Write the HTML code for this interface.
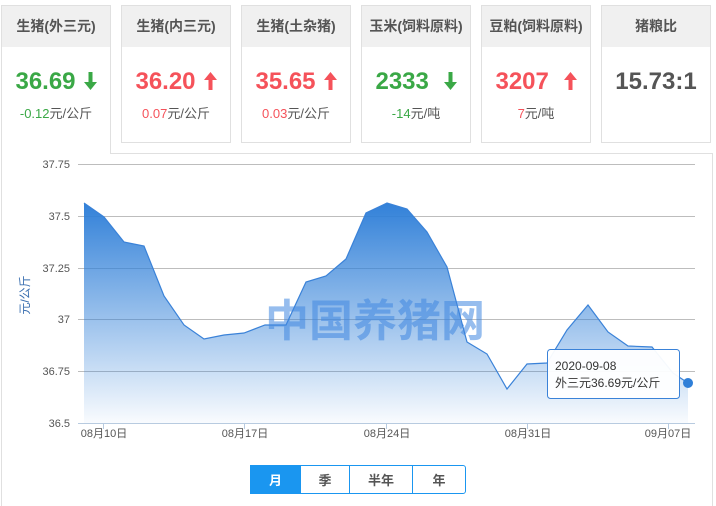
<!DOCTYPE html><html style="height:506px;overflow:hidden"><head><meta charset="utf-8"><style>
body{margin:0;width:716px;height:506px;background:#fff;font-family:"Liberation Sans","Noto Sans CJK SC",sans-serif;position:relative;overflow:hidden}
.c{position:absolute;top:5px;height:136px;border:1px solid #e0e0e0;background:#fff;text-align:center}
.h{height:41px;background:#f0f0f0;line-height:41px;font-size:14px;font-weight:bold;color:#555}
.v{font-size:24px;font-weight:bold;margin-top:20px;height:30px;line-height:30px}
.s{font-size:13px;color:#555;margin-top:6px}
.g{color:#3aa846}.r{color:#f5525a}
.ar{display:inline-block;margin-left:8px;vertical-align:-1px}
.btn{position:absolute;top:465px;height:29px;line-height:29px;text-align:center;font-size:13px;font-weight:bold;color:#555;border:1px solid #1a96f0;box-sizing:border-box;background:#fff}
</style></head><body>
<div style="position:absolute;left:1px;top:153px;width:710px;height:352px;border:1px solid #e0e0e0;border-bottom:none"></div>
<div class="c" style="left:1px;width:108px;height:148px;border-bottom:none"><div class="h">生猪(外三元)</div><div class="v g">36.69<svg class="ar" width="13" height="18" viewBox="0 0 13 18"><path d="M4.5 0h4v10h4.5l-6.5 8-6.5-8h4.5z" fill="#3aa846"/></svg></div><div class="s"><span class="g">-0.12</span>元/公斤</div></div>
<div class="c" style="left:121px;width:108px"><div class="h">生猪(内三元)</div><div class="v r">36.20<svg class="ar" width="13" height="18" viewBox="0 0 13 18"><path d="M4.5 18h4v-10h4.5l-6.5-8-6.5 8h4.5z" fill="#f5525a"/></svg></div><div class="s"><span class="r">0.07</span>元/公斤</div></div>
<div class="c" style="left:241px;width:108px"><div class="h">生猪(土杂猪)</div><div class="v r">35.65<svg class="ar" width="13" height="18" viewBox="0 0 13 18"><path d="M4.5 18h4v-10h4.5l-6.5-8-6.5 8h4.5z" fill="#f5525a"/></svg></div><div class="s"><span class="r">0.03</span>元/公斤</div></div>
<div class="c" style="left:361px;width:108px"><div class="h">玉米(饲料原料)</div><div class="v g">2333 <svg class="ar" width="13" height="18" viewBox="0 0 13 18"><path d="M4.5 0h4v10h4.5l-6.5 8-6.5-8h4.5z" fill="#3aa846"/></svg></div><div class="s"><span class="g">-14</span>元/吨</div></div>
<div class="c" style="left:481px;width:108px"><div class="h">豆粕(饲料原料)</div><div class="v r">3207 <svg class="ar" width="13" height="18" viewBox="0 0 13 18"><path d="M4.5 18h4v-10h4.5l-6.5-8-6.5 8h4.5z" fill="#f5525a"/></svg></div><div class="s"><span class="r">7</span>元/吨</div></div>
<div class="c" style="left:601px;width:108px"><div class="h">猪粮比</div><div class="v" style="color:#555">15.73:1</div></div>
<svg style="position:absolute;left:0;top:0" width="716" height="506">
<defs><linearGradient id="gr" gradientUnits="userSpaceOnUse" x1="0" y1="200" x2="0" y2="423"><stop offset="0" stop-color="#2f7fd8"/><stop offset="1" stop-color="#2f7fd8" stop-opacity="0.03"/></linearGradient></defs>
<g stroke="#bdbdbd" stroke-width="1"><line x1="78" y1="164.5" x2="695" y2="164.5"/><line x1="78" y1="216.5" x2="695" y2="216.5"/><line x1="78" y1="268.5" x2="695" y2="268.5"/><line x1="78" y1="319.5" x2="695" y2="319.5"/><line x1="78" y1="371.5" x2="695" y2="371.5"/></g>
<line x1="78" y1="423.5" x2="695" y2="423.5" stroke="#b8cbe0"/>
<g stroke="#b8cbe0"><line x1="103.5" y1="423" x2="103.5" y2="429"/><line x1="244.5" y1="423" x2="244.5" y2="429"/><line x1="386.5" y1="423" x2="386.5" y2="429"/><line x1="527.5" y1="423" x2="527.5" y2="429"/><line x1="668.5" y1="423" x2="668.5" y2="429"/></g>
<path d="M84,203 L104,217 124,242 144,246 164,296 184,325 204,339 224,335 244,333 265,325 286,325 306,282 326,276 346,259 366,213 387,203 407,209 427,232 447,267 467,342 487,354 507,389 527,364 547,363 567,330 588,305 608,332 628,346 652,347 673,373 688,383 L688,423 L84,423 Z" fill="url(#gr)" stroke="none"/>
<path d="M84,203 L104,217 124,242 144,246 164,296 184,325 204,339 224,335 244,333 265,325 286,325 306,282 326,276 346,259 366,213 387,203 407,209 427,232 447,267 467,342 487,354 507,389 527,364 547,363 567,330 588,305 608,332 628,346 652,347 673,373 688,383" fill="none" stroke="#3a82d8" stroke-width="1.2"/>
<text x="375" y="336" text-anchor="middle" font-size="44" font-weight="bold" fill="#3f86e0" fill-opacity="0.55" font-family="Noto Sans CJK SC,sans-serif">中国养猪网</text>
<g font-size="11" fill="#555" text-anchor="end"><text x="70" y="168">37.75</text><text x="70" y="220">37.5</text><text x="70" y="272">37.25</text><text x="70" y="323">37</text><text x="70" y="375">36.75</text><text x="70" y="427">36.5</text></g>
<g font-size="11" fill="#555" text-anchor="middle"><text x="104" y="437">08月10日</text><text x="245" y="437">08月17日</text><text x="387" y="437">08月24日</text><text x="528" y="437">08月31日</text><text x="668" y="437">09月07日</text></g>
<text transform="translate(29,295) rotate(-90)" text-anchor="middle" font-size="12" fill="#3a6fb0">元/公斤</text>
<rect x="547.5" y="349.5" width="132" height="49" rx="3" fill="#fff" fill-opacity="0.95" stroke="#3a82d8"/>
<text x="555" y="370" font-size="12" fill="#333">2020-09-08</text><text x="555" y="387" font-size="12" fill="#333">外三元36.69元/公斤</text>
<circle cx="688" cy="383" r="5" fill="#2f7fd8"/>
</svg>
<div class="btn" style="left:250px;width:51px;background:#1a96f0;color:#fff">月</div>
<div class="btn" style="left:300px;width:50px">季</div>
<div class="btn" style="left:349px;width:64px">半年</div>
<div class="btn" style="left:412px;width:54px;border-radius:0 3px 3px 0">年</div>
</body></html>
